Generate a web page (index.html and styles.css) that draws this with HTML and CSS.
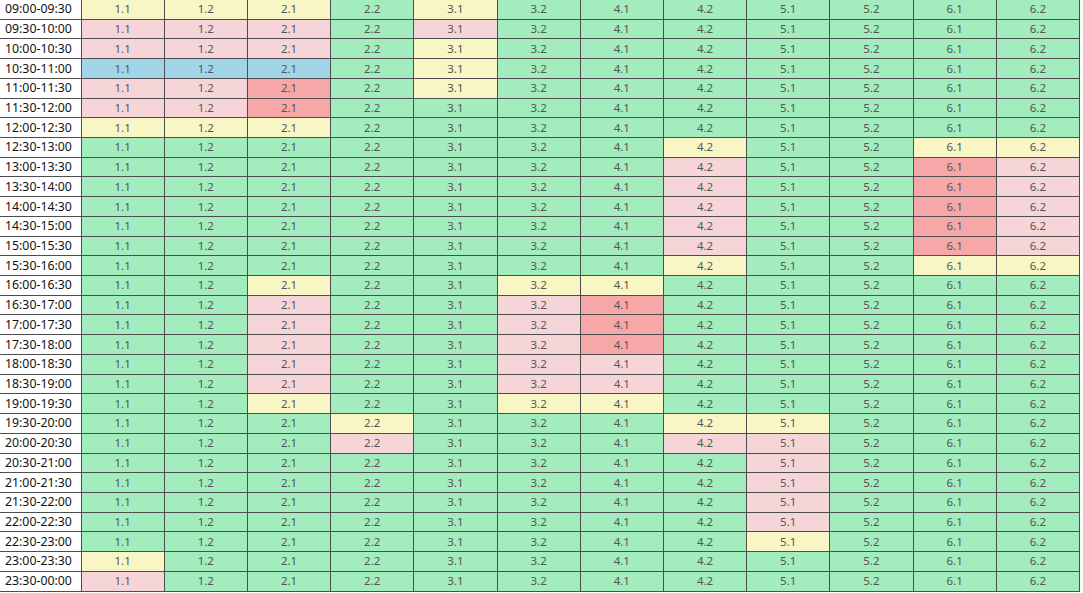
FILE: index.html
```html
<!DOCTYPE html>
<html>
<head>
<meta charset="utf-8">
<link rel="stylesheet" href="styles.css">
</head>
<body>
<table class="grid">
<colgroup><col class="c-time"><col span="12"></colgroup>
<tbody>
<tr><td class="t">09:00-09:30</td><td class="y">1.1</td><td class="y">1.2</td><td class="y">2.1</td><td>2.2</td><td class="y">3.1</td><td>3.2</td><td>4.1</td><td>4.2</td><td>5.1</td><td>5.2</td><td>6.1</td><td>6.2</td></tr>
<tr><td class="t">09:30-10:00</td><td class="p">1.1</td><td class="p">1.2</td><td class="p">2.1</td><td>2.2</td><td class="p">3.1</td><td>3.2</td><td>4.1</td><td>4.2</td><td>5.1</td><td>5.2</td><td>6.1</td><td>6.2</td></tr>
<tr><td class="t">10:00-10:30</td><td class="p">1.1</td><td class="p">1.2</td><td class="p">2.1</td><td>2.2</td><td class="y">3.1</td><td>3.2</td><td>4.1</td><td>4.2</td><td>5.1</td><td>5.2</td><td>6.1</td><td>6.2</td></tr>
<tr><td class="t">10:30-11:00</td><td class="b">1.1</td><td class="b">1.2</td><td class="b">2.1</td><td>2.2</td><td class="y">3.1</td><td>3.2</td><td>4.1</td><td>4.2</td><td>5.1</td><td>5.2</td><td>6.1</td><td>6.2</td></tr>
<tr><td class="t">11:00-11:30</td><td class="p">1.1</td><td class="p">1.2</td><td class="r">2.1</td><td>2.2</td><td class="y">3.1</td><td>3.2</td><td>4.1</td><td>4.2</td><td>5.1</td><td>5.2</td><td>6.1</td><td>6.2</td></tr>
<tr><td class="t">11:30-12:00</td><td class="p">1.1</td><td class="p">1.2</td><td class="r">2.1</td><td>2.2</td><td>3.1</td><td>3.2</td><td>4.1</td><td>4.2</td><td>5.1</td><td>5.2</td><td>6.1</td><td>6.2</td></tr>
<tr><td class="t">12:00-12:30</td><td class="y">1.1</td><td class="y">1.2</td><td class="y">2.1</td><td>2.2</td><td>3.1</td><td>3.2</td><td>4.1</td><td>4.2</td><td>5.1</td><td>5.2</td><td>6.1</td><td>6.2</td></tr>
<tr><td class="t">12:30-13:00</td><td>1.1</td><td>1.2</td><td>2.1</td><td>2.2</td><td>3.1</td><td>3.2</td><td>4.1</td><td class="y">4.2</td><td>5.1</td><td>5.2</td><td class="y">6.1</td><td class="y">6.2</td></tr>
<tr><td class="t">13:00-13:30</td><td>1.1</td><td>1.2</td><td>2.1</td><td>2.2</td><td>3.1</td><td>3.2</td><td>4.1</td><td class="p">4.2</td><td>5.1</td><td>5.2</td><td class="r">6.1</td><td class="p">6.2</td></tr>
<tr><td class="t">13:30-14:00</td><td>1.1</td><td>1.2</td><td>2.1</td><td>2.2</td><td>3.1</td><td>3.2</td><td>4.1</td><td class="p">4.2</td><td>5.1</td><td>5.2</td><td class="r">6.1</td><td class="p">6.2</td></tr>
<tr><td class="t">14:00-14:30</td><td>1.1</td><td>1.2</td><td>2.1</td><td>2.2</td><td>3.1</td><td>3.2</td><td>4.1</td><td class="p">4.2</td><td>5.1</td><td>5.2</td><td class="r">6.1</td><td class="p">6.2</td></tr>
<tr><td class="t">14:30-15:00</td><td>1.1</td><td>1.2</td><td>2.1</td><td>2.2</td><td>3.1</td><td>3.2</td><td>4.1</td><td class="p">4.2</td><td>5.1</td><td>5.2</td><td class="r">6.1</td><td class="p">6.2</td></tr>
<tr><td class="t">15:00-15:30</td><td>1.1</td><td>1.2</td><td>2.1</td><td>2.2</td><td>3.1</td><td>3.2</td><td>4.1</td><td class="p">4.2</td><td>5.1</td><td>5.2</td><td class="r">6.1</td><td class="p">6.2</td></tr>
<tr><td class="t">15:30-16:00</td><td>1.1</td><td>1.2</td><td>2.1</td><td>2.2</td><td>3.1</td><td>3.2</td><td>4.1</td><td class="y">4.2</td><td>5.1</td><td>5.2</td><td class="y">6.1</td><td class="y">6.2</td></tr>
<tr><td class="t">16:00-16:30</td><td>1.1</td><td>1.2</td><td class="y">2.1</td><td>2.2</td><td>3.1</td><td class="y">3.2</td><td class="y">4.1</td><td>4.2</td><td>5.1</td><td>5.2</td><td>6.1</td><td>6.2</td></tr>
<tr><td class="t">16:30-17:00</td><td>1.1</td><td>1.2</td><td class="p">2.1</td><td>2.2</td><td>3.1</td><td class="p">3.2</td><td class="r">4.1</td><td>4.2</td><td>5.1</td><td>5.2</td><td>6.1</td><td>6.2</td></tr>
<tr><td class="t">17:00-17:30</td><td>1.1</td><td>1.2</td><td class="p">2.1</td><td>2.2</td><td>3.1</td><td class="p">3.2</td><td class="r">4.1</td><td>4.2</td><td>5.1</td><td>5.2</td><td>6.1</td><td>6.2</td></tr>
<tr><td class="t">17:30-18:00</td><td>1.1</td><td>1.2</td><td class="p">2.1</td><td>2.2</td><td>3.1</td><td class="p">3.2</td><td class="r">4.1</td><td>4.2</td><td>5.1</td><td>5.2</td><td>6.1</td><td>6.2</td></tr>
<tr><td class="t">18:00-18:30</td><td>1.1</td><td>1.2</td><td class="p">2.1</td><td>2.2</td><td>3.1</td><td class="p">3.2</td><td class="p">4.1</td><td>4.2</td><td>5.1</td><td>5.2</td><td>6.1</td><td>6.2</td></tr>
<tr><td class="t">18:30-19:00</td><td>1.1</td><td>1.2</td><td class="p">2.1</td><td>2.2</td><td>3.1</td><td class="p">3.2</td><td class="p">4.1</td><td>4.2</td><td>5.1</td><td>5.2</td><td>6.1</td><td>6.2</td></tr>
<tr><td class="t">19:00-19:30</td><td>1.1</td><td>1.2</td><td class="y">2.1</td><td>2.2</td><td>3.1</td><td class="y">3.2</td><td class="y">4.1</td><td>4.2</td><td>5.1</td><td>5.2</td><td>6.1</td><td>6.2</td></tr>
<tr><td class="t">19:30-20:00</td><td>1.1</td><td>1.2</td><td>2.1</td><td class="y">2.2</td><td>3.1</td><td>3.2</td><td>4.1</td><td class="y">4.2</td><td class="y">5.1</td><td>5.2</td><td>6.1</td><td>6.2</td></tr>
<tr><td class="t">20:00-20:30</td><td>1.1</td><td>1.2</td><td>2.1</td><td class="p">2.2</td><td>3.1</td><td>3.2</td><td>4.1</td><td class="p">4.2</td><td class="p">5.1</td><td>5.2</td><td>6.1</td><td>6.2</td></tr>
<tr><td class="t">20:30-21:00</td><td>1.1</td><td>1.2</td><td>2.1</td><td>2.2</td><td>3.1</td><td>3.2</td><td>4.1</td><td>4.2</td><td class="p">5.1</td><td>5.2</td><td>6.1</td><td>6.2</td></tr>
<tr><td class="t">21:00-21:30</td><td>1.1</td><td>1.2</td><td>2.1</td><td>2.2</td><td>3.1</td><td>3.2</td><td>4.1</td><td>4.2</td><td class="p">5.1</td><td>5.2</td><td>6.1</td><td>6.2</td></tr>
<tr><td class="t">21:30-22:00</td><td>1.1</td><td>1.2</td><td>2.1</td><td>2.2</td><td>3.1</td><td>3.2</td><td>4.1</td><td>4.2</td><td class="p">5.1</td><td>5.2</td><td>6.1</td><td>6.2</td></tr>
<tr><td class="t">22:00-22:30</td><td>1.1</td><td>1.2</td><td>2.1</td><td>2.2</td><td>3.1</td><td>3.2</td><td>4.1</td><td>4.2</td><td class="p">5.1</td><td>5.2</td><td>6.1</td><td>6.2</td></tr>
<tr><td class="t">22:30-23:00</td><td>1.1</td><td>1.2</td><td>2.1</td><td>2.2</td><td>3.1</td><td>3.2</td><td>4.1</td><td>4.2</td><td class="y">5.1</td><td>5.2</td><td>6.1</td><td>6.2</td></tr>
<tr><td class="t">23:00-23:30</td><td class="y">1.1</td><td>1.2</td><td>2.1</td><td>2.2</td><td>3.1</td><td>3.2</td><td>4.1</td><td>4.2</td><td>5.1</td><td>5.2</td><td>6.1</td><td>6.2</td></tr>
<tr><td class="t">23:30-00:00</td><td class="p">1.1</td><td>1.2</td><td>2.1</td><td>2.2</td><td>3.1</td><td>3.2</td><td>4.1</td><td>4.2</td><td>5.1</td><td>5.2</td><td>6.1</td><td>6.2</td></tr>
</tbody>
</table>
</body>
</html>
```
FILE: styles.css
```css
html, body {
  margin: 0;
  padding: 0;
  background: #ffffff;
}

.grid {
  border-collapse: collapse;
  table-layout: fixed;
  width: 1080px;
  height: 592px;
  font-family: "Noto Sans", "DejaVu Sans", sans-serif;
  font-size: 11.5px;
}

.c-time {
  width: 81px;
}

.grid td {
  border-right: 1px solid #4d4d4d;
  border-bottom: 1px solid #4d4d4d;
  padding: 0;
  text-align: center;
  color: #555555;
  background: #a2ecbd;
  line-height: 18px;
  white-space: nowrap;
  overflow: hidden;
}

.grid td.t {
  background: #ffffff;
  color: #111111;
  text-align: left;
  padding-left: 5px;
  font-size: 12.3px;
}

.grid td.y { background: #f8f6c4; }
.grid td.p { background: #f6d5d8; }
.grid td.r { background: #f6a7a7; }
.grid td.b { background: #a3d5e8; }
```
